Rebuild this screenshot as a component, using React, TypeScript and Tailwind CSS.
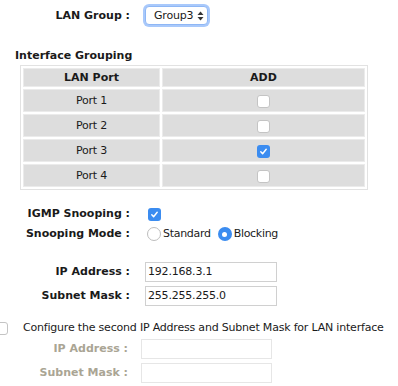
import React from "react";

const font = { fontFamily: '"DejaVu Sans", Verdana, sans-serif' };

function CheckBox({ checked = false }: { checked?: boolean }) {
  if (checked) {
    return (
      <span className="inline-flex h-[13px] w-[13px] items-center justify-center rounded-[3px] bg-[#3b8cf0]">
        <svg width="9" height="9" viewBox="0 0 10 10" fill="none">
          <path d="M2 5.4l2 2.1L8 2.5" stroke="white" strokeWidth="1.6" strokeLinecap="round" strokeLinejoin="round" />
        </svg>
      </span>
    );
  }
  return <span className="inline-block h-[13px] w-[13px] rounded-[3px] border border-[#c4c4c4] bg-white" />;
}

function Radio({ checked = false }: { checked?: boolean }) {
  if (checked) {
    return (
      <span className="inline-flex h-[14px] w-[14px] items-center justify-center rounded-full bg-[#3b8cf0]">
        <span className="h-[5px] w-[5px] rounded-full bg-white" />
      </span>
    );
  }
  return <span className="inline-block h-[14px] w-[14px] rounded-full border border-[#bdbdbd] bg-white" />;
}

const ports = ["Port 1", "Port 2", "Port 3", "Port 4"];

export default function App() {
  return (
    <div className="h-[386px] w-[398px] overflow-hidden bg-white text-[11px] leading-[16px] text-[#1a1a1a]" style={font}>
      {/* LAN group selector */}
      <div className="flex h-[30px] items-center pt-px">
        <div className="w-[130px] text-right font-bold">LAN Group :</div>
        <div className="ml-[15px] flex h-[19px] items-center gap-[4px] rounded-[4px] border border-[#8fb7f5] bg-white pl-[8px] pr-[3px] tracking-[-0.2px] shadow-[0_0_0_2px_#a9c9fb]">
          <span>Group3</span>
          <svg width="7" height="10" viewBox="0 0 7 10">
            <path d="M3.5 0.5L6.5 4H0.5z" fill="#333" />
            <path d="M3.5 9.5L6.5 6H0.5z" fill="#333" />
          </svg>
        </div>
      </div>

      <div className="mt-[18px] h-[16px] pl-[15px] font-bold">Interface Grouping</div>

      <table className="ml-[20px] mt-px w-[348px] border-separate border-spacing-[2px] border border-[#e2e2e2] text-center">
        <thead>
          <tr>
            <th className="h-[19px] w-[137px] border border-[#ebebeb] bg-[#dddddd] p-0 font-bold">LAN Port</th>
            <th className="h-[19px] border border-[#ebebeb] bg-[#dddddd] p-0 font-bold">ADD</th>
          </tr>
        </thead>
        <tbody>
          {ports.map((p) => (
            <tr key={p}>
              <td className="h-[23px] border border-[#ebebeb] bg-[#dddddd] p-0 tracking-[-0.2px]">{p}</td>
              <td className="h-[23px] border border-[#ebebeb] bg-[#dddddd] p-0">
                <div className="flex h-[21px] items-center justify-center pt-[2px]">
                  <CheckBox checked={p === "Port 3"} />
                </div>
              </td>
            </tr>
          ))}
        </tbody>
      </table>

      {/* IGMP */}
      <div className="mt-[14px] flex h-[20px] items-center">
        <div className="w-[130px] text-right font-bold">IGMP Snooping :</div>
        <div className="ml-[18px] flex">
          <CheckBox checked />
        </div>
      </div>
      <div className="flex h-[20px] items-center">
        <div className="w-[130px] text-right font-bold">Snooping Mode :</div>
        <div className="ml-[17px] flex items-center tracking-[-0.3px]">
          <Radio />
          <span className="ml-[2px]">Standard</span>
          <span className="ml-[7px] flex">
            <Radio checked />
          </span>
          <span className="ml-[2px]">Blocking</span>
        </div>
      </div>

      {/* primary address */}
      <div className="mt-[18px] flex flex-col gap-[4px]">
        <div className="flex items-center">
          <div className="w-[130px] text-right font-bold">IP Address :</div>
          <div className="ml-[15px] flex h-[20px] w-[132px] items-center border border-[#d0d0d0] pl-[2px] tracking-[-0.2px]">192.168.3.1</div>
        </div>
        <div className="flex items-center">
          <div className="w-[130px] text-right font-bold">Subnet Mask :</div>
          <div className="ml-[15px] flex h-[20px] w-[132px] items-center border border-[#d0d0d0] pl-[2px] tracking-[-0.2px]">255.255.255.0</div>
        </div>
      </div>

      {/* second address */}
      <div className="mt-[15px] flex h-[14px] items-center">
        <span className="-ml-[5px] flex">
          <CheckBox />
        </span>
        <span className="ml-[15px] tracking-[-0.2px]">Configure the second IP Address and Subnet Mask for LAN interface</span>
      </div>
      <div className="mt-[4px] flex flex-col gap-[4px] text-[#aaa594]">
        <div className="flex items-center">
          <div className="w-[128px] text-right font-bold">IP Address :</div>
          <div className="ml-[13px] h-[20px] w-[131px] border border-[#e6e6e6]" />
        </div>
        <div className="flex items-center">
          <div className="w-[128px] text-right font-bold">Subnet Mask :</div>
          <div className="ml-[13px] h-[20px] w-[131px] border border-[#e6e6e6]" />
        </div>
      </div>
    </div>
  );
}
